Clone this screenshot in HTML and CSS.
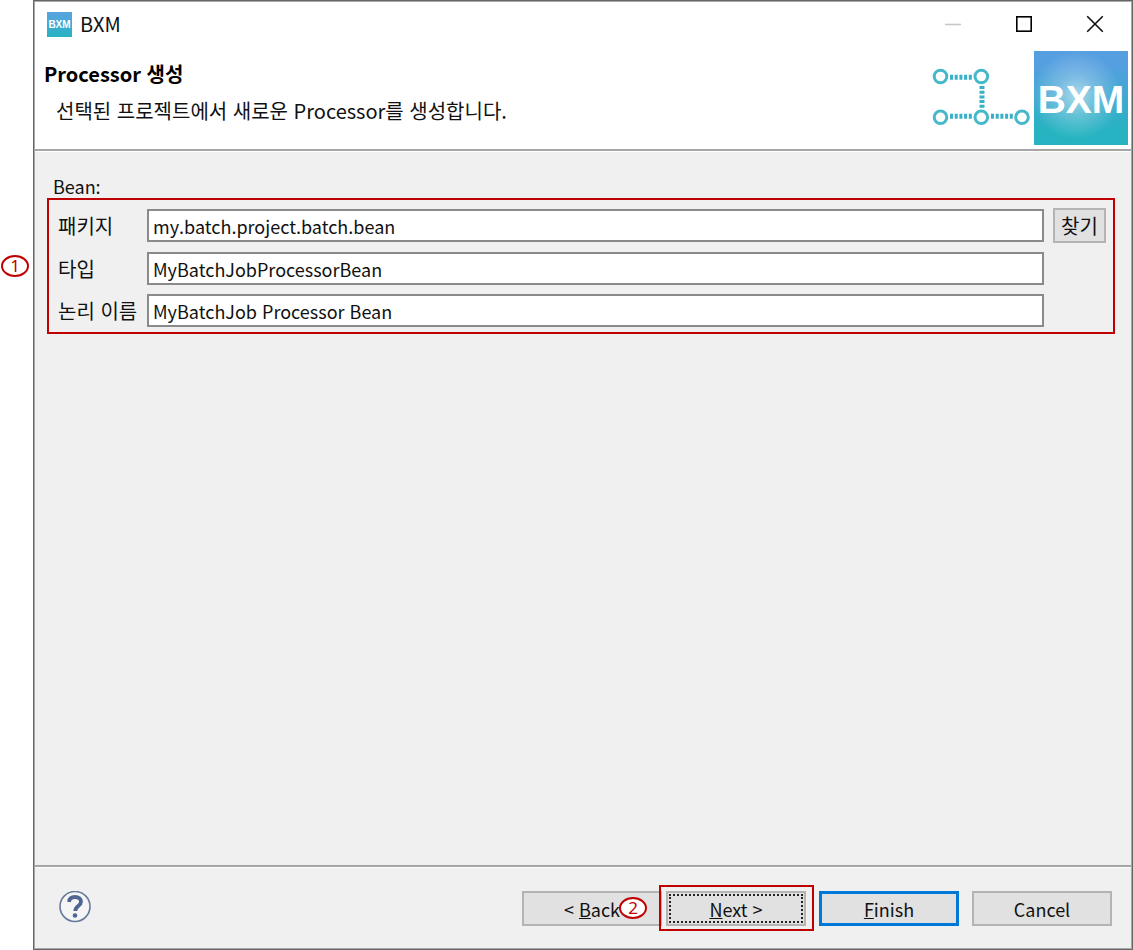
FILE: index.html
```
<!DOCTYPE html>
<html lang="ko">
<head>
<meta charset="utf-8">
<meta name="viewport" content="width=device-width, initial-scale=1">
<title>BXM</title>
<link rel="stylesheet" href="styles.css">
</head>
<body>
<main class="window">
  <div class="titlebar">
    <span class="app-icon" aria-hidden="true">BXM</span>
    <span class="app-name">BXM</span>
    <div class="window-controls">
      <button class="control" type="button" aria-label="Minimize" disabled>
        <svg width="18" height="18" viewBox="0 0 18 18"><path d="M1 9.5h16" stroke="#c8c8c8" stroke-width="1.6"/></svg>
      </button>
      <button class="control" type="button" aria-label="Maximize">
        <svg width="18" height="18" viewBox="0 0 18 18"><rect x="1.8" y="1.8" width="14.4" height="14.4" fill="none" stroke="#000" stroke-width="1.6"/></svg>
      </button>
      <button class="control" type="button" aria-label="Close">
        <svg width="18" height="18" viewBox="0 0 18 18"><path d="M1.2 1.2l15.6 15.6M16.8 1.2L1.2 16.8" stroke="#111" stroke-width="1.6"/></svg>
      </button>
    </div>
  </div>

  <header class="banner">
    <div class="banner-text">
      <h1 class="banner-title">Processor 생성</h1>
      <p class="banner-message">선택된 프로젝트에서 새로운 Processor를 생성합니다.</p>
    </div>
    <svg class="banner-flow" width="98" height="60" viewBox="0 0 98 60" aria-hidden="true">
      <g fill="none" stroke="#45b8ca" stroke-width="3">
        <circle cx="8.500" cy="9.500" r="6.300"/><circle cx="49.300" cy="9.500" r="6.300"/>
        <circle cx="8.500" cy="50.300" r="6.300"/><circle cx="49.300" cy="50.300" r="6.300"/><circle cx="90" cy="50.300" r="6.300"/>
      </g>
      <g fill="none" stroke="#37b0c8" stroke-width="5" stroke-dasharray="3 1.700">
        <path d="M18 10.300h22.500M18 49.300h22.500M59 49.300h22.500M50 19v22.500"/>
      </g>
    </svg>
    <span class="banner-logo">BXM</span>
  </header>

  <form class="wizard">
    <section class="page">
      <h2 class="group-title" lang="en">Bean:</h2>
      <div class="fields">
        <span class="callout callout-fields">1</span>
        <label class="label" for="package">패키지</label>
        <input class="input" id="package" type="text" value="my.batch.project.batch.bean">
        <button class="button button-browse" type="button">찾기</button>
        <label class="label" for="type">타입</label>
        <input class="input" id="type" type="text" value="MyBatchJobProcessorBean">
        <label class="label" for="logical-name">논리 이름</label>
        <input class="input" id="logical-name" type="text" value="MyBatchJob Processor Bean">
      </div>
    </section>

    <footer class="footer">
      <button class="help" type="button" aria-label="Help">
        <svg width="32" height="32" viewBox="0 0 32 32">
          <circle cx="16" cy="15.500" r="15" fill="#f5f5f5" stroke="#66799c" stroke-width="1.600"/>
          <path d="M10 11C10.300 7.300 12.800 6 16 6c3.700 0 6 1.800 6 4.700 0 4.500-5.700 4.200-5.700 9.200" fill="none" stroke="#506592" stroke-width="3.800"/>
          <circle cx="16" cy="24.500" r="2.300" fill="#506592"/>
        </svg>
      </button>
      <div class="actions">
        <div class="steps">
          <button class="button button-action" type="button">&lt; <u>B</u>ack</button>
          <div class="marked">
            <button class="button button-action button-focused" type="button"><u>N</u>ext &gt;</button>
            <span class="callout callout-next">2</span>
          </div>
        </div>
        <button class="button button-action button-default" type="submit"><u>F</u>inish</button>
        <button class="button button-action" type="button">Cancel</button>
      </div>
    </footer>
  </form>
</main>
</body>
</html>
```
FILE: styles.css
```
* {
  box-sizing: border-box;
}

body {
  margin: 0;
  padding-left: 33px;
  background: #fff;
  color: #111;
  font: 20px/24px "Noto Sans CJK KR", sans-serif;
}

button,
input {
  font: inherit;
  color: inherit;
}

.window {
  display: flex;
  flex-direction: column;
  min-height: 100vh;
  padding: 1px;
  border: 1px solid #666;
  background: #a8a8a8;
}

.titlebar {
  display: flex;
  align-items: center;
  height: 44px;
  padding: 0 1px 0 12px;
  background: #fff;
}

.app-icon {
  width: 25px;
  height: 25px;
  margin-right: 8px;
  background: linear-gradient(#5aa2e0, #27b3c1);
  color: #fff;
  font: bold 10px/25px "Liberation Sans", sans-serif;
  text-align: center;
}

.window-controls {
  display: flex;
  margin-left: auto;
}

.control {
  display: flex;
  align-items: center;
  justify-content: center;
  width: 71px;
  height: 44px;
  padding: 0;
  border: 0;
  background: none;
}

.banner {
  display: flex;
  align-items: flex-start;
  padding: 5px 3px 4px 9px;
  border-bottom: 2px solid #a6a6a6;
  background: #fff;
}

.banner-text {
  flex: 1;
  padding-top: 11px;
}

.banner-title {
  margin: 0;
  font-size: 20px;
  line-height: 24px;
  color: #000;
}

.banner-message {
  margin: 13px 0 0 12px;
}

.banner-flow {
  margin: 16px 4px 0 0;
}

.banner-logo {
  width: 94px;
  height: 94px;
  background:
    radial-gradient(circle at 45% 47%, rgba(255, 255, 255, .55), rgba(255, 255, 255, .25) 28%, rgba(255, 255, 255, 0) 62%),
    linear-gradient(#559fe0 15%, #27b3c1 85%);
  color: #fff;
  font: bold 39px/98px "Liberation Sans", sans-serif;
  text-align: center;
}

.wizard {
  display: flex;
  flex: 1;
  flex-direction: column;
  border-top: 1px solid #fff;
  background: #f0f0f0;
}

.page {
  flex: 1;
  padding: 22px 16px 0 12px;
}

.group-title {
  margin: 0 0 0 6px;
  font-size: 18px;
  font-weight: normal;
  line-height: 24px;
}

.fields {
  position: relative;
  display: grid;
  grid-template-columns: 80px 1fr 53px;
  align-items: center;
  gap: 9px;
  padding: 8px 7px 5px 9px;
  border: 2px solid #c00000;
}

.label {
  grid-column: 1;
  white-space: nowrap;
}

.input {
  width: 100%;
  height: 33px;
  padding: 0 4px;
  border: 2px solid #8a8a8a;
  background: #fff;
  font-size: 18px;
}

.button {
  height: 35px;
  padding: 0;
  border: 2px solid #b4b4b4;
  background: #e1e1e1;
}

.footer {
  display: flex;
  align-items: flex-start;
  justify-content: space-between;
  padding: 24px 19px 22px 24px;
  border-top: 2px solid #a6a6a6;
  box-shadow: inset 0 1px #fff;
}

.help {
  display: flex;
  padding: 0;
  border: 0;
  background: none;
}

.actions {
  display: flex;
  gap: 13px;
}

.steps {
  display: flex;
  gap: 4px;
}

.button-action {
  width: 140px;
  font-size: 18px;
}

.button-focused {
  outline: 2px dotted #222;
  outline-offset: -5px;
}

.button-default {
  border: 3px solid #0078d7;
}

.marked {
  position: relative;
}

.marked::before {
  position: absolute;
  inset: -6px -8px -5px -7px;
  border: 2px solid #c00000;
  content: "";
  pointer-events: none;
}

.callout {
  position: absolute;
  width: 28px;
  height: 22px;
  border: 2px solid #c00000;
  border-radius: 50%;
  background: #fff;
  color: #c00000;
  font: 17px/18px "Noto Sans", sans-serif;
  text-align: center;
}

.callout-fields {
  top: 55px;
  left: -48px;
}

.callout-next {
  top: 6px;
  left: -47px;
}
```
